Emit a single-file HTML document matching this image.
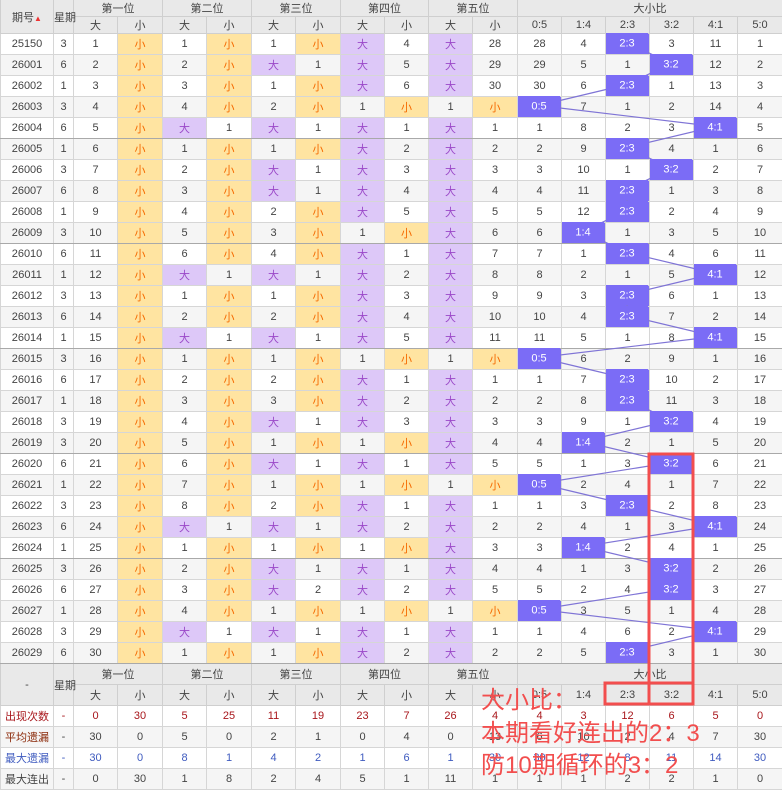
<!DOCTYPE html>
<html><head><meta charset="utf-8"><style>
body{margin:0;width:782px;height:790px;overflow:hidden;background:#fff;font-family:"Liberation Sans","Noto Sans CJK SC",sans-serif;}
.w{position:relative;width:782px;height:790px}
table{border-collapse:collapse;table-layout:fixed;width:782px;position:absolute;left:0;top:-1px}
td,th{padding:0;border:1px solid #d6d6d6;text-align:center;font-size:11px;color:#444;font-weight:normal;overflow:hidden;white-space:nowrap}
th.v{overflow:visible}
tr{height:21px}
th{background:#e9e9e9;color:#444;border-color:#cfcfcf}
tr.hd1{height:17px} tr.hd2{height:16px}
tr.f1,tr.f2{height:21px}
tbody tr:nth-child(even) td{background:#f5f5f5}
td.s{background:#ffe4a1 !important;color:#f56a00}
td.b{background:#ddc8f8 !important;color:#9a48c8}
td.h{background:#7b6cf6 !important;color:#fff}
tr.g td{border-bottom:1px solid #a9a9a9}
.r td{color:#a8161b} .a td{color:#444} .m td{color:#3f5bbf}
</style></head><body><div class="w">
<table>
<colgroup><col style="width:53px"><col style="width:20px"><col style="width:44px"><col style="width:45px"><col style="width:44px"><col style="width:45px"><col style="width:44px"><col style="width:45px"><col style="width:44px"><col style="width:44px"><col style="width:44px"><col style="width:45px"><col style="width:44px"><col style="width:44px"><col style="width:44px"><col style="width:44px"><col style="width:44px"><col style="width:45px"></colgroup>
<thead>
<tr class="hd1"><th rowspan="2">期号<span style="color:#e33;font-size:8px">▲</span></th><th rowspan="2" class="v">星期</th><th colspan="2">第一位</th><th colspan="2">第二位</th><th colspan="2">第三位</th><th colspan="2">第四位</th><th colspan="2">第五位</th><th colspan="6">大小比</th></tr>
<tr class="hd2"><th>大</th><th>小</th><th>大</th><th>小</th><th>大</th><th>小</th><th>大</th><th>小</th><th>大</th><th>小</th><th>0:5</th><th>1:4</th><th>2:3</th><th>3:2</th><th>4:1</th><th>5:0</th></tr>
</thead>
<tbody>
<tr><td>25150</td><td>3</td><td>1</td><td class="s">小</td><td>1</td><td class="s">小</td><td>1</td><td class="s">小</td><td class="b">大</td><td>4</td><td class="b">大</td><td>28</td><td>28</td><td>4</td><td class="h">2:3</td><td>3</td><td>11</td><td>1</td></tr>
<tr><td>26001</td><td>6</td><td>2</td><td class="s">小</td><td>2</td><td class="s">小</td><td class="b">大</td><td>1</td><td class="b">大</td><td>5</td><td class="b">大</td><td>29</td><td>29</td><td>5</td><td>1</td><td class="h">3:2</td><td>12</td><td>2</td></tr>
<tr><td>26002</td><td>1</td><td>3</td><td class="s">小</td><td>3</td><td class="s">小</td><td>1</td><td class="s">小</td><td class="b">大</td><td>6</td><td class="b">大</td><td>30</td><td>30</td><td>6</td><td class="h">2:3</td><td>1</td><td>13</td><td>3</td></tr>
<tr><td>26003</td><td>3</td><td>4</td><td class="s">小</td><td>4</td><td class="s">小</td><td>2</td><td class="s">小</td><td>1</td><td class="s">小</td><td>1</td><td class="s">小</td><td class="h">0:5</td><td>7</td><td>1</td><td>2</td><td>14</td><td>4</td></tr>
<tr class="g"><td>26004</td><td>6</td><td>5</td><td class="s">小</td><td class="b">大</td><td>1</td><td class="b">大</td><td>1</td><td class="b">大</td><td>1</td><td class="b">大</td><td>1</td><td>1</td><td>8</td><td>2</td><td>3</td><td class="h">4:1</td><td>5</td></tr>
<tr><td>26005</td><td>1</td><td>6</td><td class="s">小</td><td>1</td><td class="s">小</td><td>1</td><td class="s">小</td><td class="b">大</td><td>2</td><td class="b">大</td><td>2</td><td>2</td><td>9</td><td class="h">2:3</td><td>4</td><td>1</td><td>6</td></tr>
<tr><td>26006</td><td>3</td><td>7</td><td class="s">小</td><td>2</td><td class="s">小</td><td class="b">大</td><td>1</td><td class="b">大</td><td>3</td><td class="b">大</td><td>3</td><td>3</td><td>10</td><td>1</td><td class="h">3:2</td><td>2</td><td>7</td></tr>
<tr><td>26007</td><td>6</td><td>8</td><td class="s">小</td><td>3</td><td class="s">小</td><td class="b">大</td><td>1</td><td class="b">大</td><td>4</td><td class="b">大</td><td>4</td><td>4</td><td>11</td><td class="h">2:3</td><td>1</td><td>3</td><td>8</td></tr>
<tr><td>26008</td><td>1</td><td>9</td><td class="s">小</td><td>4</td><td class="s">小</td><td>2</td><td class="s">小</td><td class="b">大</td><td>5</td><td class="b">大</td><td>5</td><td>5</td><td>12</td><td class="h">2:3</td><td>2</td><td>4</td><td>9</td></tr>
<tr class="g"><td>26009</td><td>3</td><td>10</td><td class="s">小</td><td>5</td><td class="s">小</td><td>3</td><td class="s">小</td><td>1</td><td class="s">小</td><td class="b">大</td><td>6</td><td>6</td><td class="h">1:4</td><td>1</td><td>3</td><td>5</td><td>10</td></tr>
<tr><td>26010</td><td>6</td><td>11</td><td class="s">小</td><td>6</td><td class="s">小</td><td>4</td><td class="s">小</td><td class="b">大</td><td>1</td><td class="b">大</td><td>7</td><td>7</td><td>1</td><td class="h">2:3</td><td>4</td><td>6</td><td>11</td></tr>
<tr><td>26011</td><td>1</td><td>12</td><td class="s">小</td><td class="b">大</td><td>1</td><td class="b">大</td><td>1</td><td class="b">大</td><td>2</td><td class="b">大</td><td>8</td><td>8</td><td>2</td><td>1</td><td>5</td><td class="h">4:1</td><td>12</td></tr>
<tr><td>26012</td><td>3</td><td>13</td><td class="s">小</td><td>1</td><td class="s">小</td><td>1</td><td class="s">小</td><td class="b">大</td><td>3</td><td class="b">大</td><td>9</td><td>9</td><td>3</td><td class="h">2:3</td><td>6</td><td>1</td><td>13</td></tr>
<tr><td>26013</td><td>6</td><td>14</td><td class="s">小</td><td>2</td><td class="s">小</td><td>2</td><td class="s">小</td><td class="b">大</td><td>4</td><td class="b">大</td><td>10</td><td>10</td><td>4</td><td class="h">2:3</td><td>7</td><td>2</td><td>14</td></tr>
<tr class="g"><td>26014</td><td>1</td><td>15</td><td class="s">小</td><td class="b">大</td><td>1</td><td class="b">大</td><td>1</td><td class="b">大</td><td>5</td><td class="b">大</td><td>11</td><td>11</td><td>5</td><td>1</td><td>8</td><td class="h">4:1</td><td>15</td></tr>
<tr><td>26015</td><td>3</td><td>16</td><td class="s">小</td><td>1</td><td class="s">小</td><td>1</td><td class="s">小</td><td>1</td><td class="s">小</td><td>1</td><td class="s">小</td><td class="h">0:5</td><td>6</td><td>2</td><td>9</td><td>1</td><td>16</td></tr>
<tr><td>26016</td><td>6</td><td>17</td><td class="s">小</td><td>2</td><td class="s">小</td><td>2</td><td class="s">小</td><td class="b">大</td><td>1</td><td class="b">大</td><td>1</td><td>1</td><td>7</td><td class="h">2:3</td><td>10</td><td>2</td><td>17</td></tr>
<tr><td>26017</td><td>1</td><td>18</td><td class="s">小</td><td>3</td><td class="s">小</td><td>3</td><td class="s">小</td><td class="b">大</td><td>2</td><td class="b">大</td><td>2</td><td>2</td><td>8</td><td class="h">2:3</td><td>11</td><td>3</td><td>18</td></tr>
<tr><td>26018</td><td>3</td><td>19</td><td class="s">小</td><td>4</td><td class="s">小</td><td class="b">大</td><td>1</td><td class="b">大</td><td>3</td><td class="b">大</td><td>3</td><td>3</td><td>9</td><td>1</td><td class="h">3:2</td><td>4</td><td>19</td></tr>
<tr class="g"><td>26019</td><td>3</td><td>20</td><td class="s">小</td><td>5</td><td class="s">小</td><td>1</td><td class="s">小</td><td>1</td><td class="s">小</td><td class="b">大</td><td>4</td><td>4</td><td class="h">1:4</td><td>2</td><td>1</td><td>5</td><td>20</td></tr>
<tr><td>26020</td><td>6</td><td>21</td><td class="s">小</td><td>6</td><td class="s">小</td><td class="b">大</td><td>1</td><td class="b">大</td><td>1</td><td class="b">大</td><td>5</td><td>5</td><td>1</td><td>3</td><td class="h">3:2</td><td>6</td><td>21</td></tr>
<tr><td>26021</td><td>1</td><td>22</td><td class="s">小</td><td>7</td><td class="s">小</td><td>1</td><td class="s">小</td><td>1</td><td class="s">小</td><td>1</td><td class="s">小</td><td class="h">0:5</td><td>2</td><td>4</td><td>1</td><td>7</td><td>22</td></tr>
<tr><td>26022</td><td>3</td><td>23</td><td class="s">小</td><td>8</td><td class="s">小</td><td>2</td><td class="s">小</td><td class="b">大</td><td>1</td><td class="b">大</td><td>1</td><td>1</td><td>3</td><td class="h">2:3</td><td>2</td><td>8</td><td>23</td></tr>
<tr><td>26023</td><td>6</td><td>24</td><td class="s">小</td><td class="b">大</td><td>1</td><td class="b">大</td><td>1</td><td class="b">大</td><td>2</td><td class="b">大</td><td>2</td><td>2</td><td>4</td><td>1</td><td>3</td><td class="h">4:1</td><td>24</td></tr>
<tr class="g"><td>26024</td><td>1</td><td>25</td><td class="s">小</td><td>1</td><td class="s">小</td><td>1</td><td class="s">小</td><td>1</td><td class="s">小</td><td class="b">大</td><td>3</td><td>3</td><td class="h">1:4</td><td>2</td><td>4</td><td>1</td><td>25</td></tr>
<tr><td>26025</td><td>3</td><td>26</td><td class="s">小</td><td>2</td><td class="s">小</td><td class="b">大</td><td>1</td><td class="b">大</td><td>1</td><td class="b">大</td><td>4</td><td>4</td><td>1</td><td>3</td><td class="h">3:2</td><td>2</td><td>26</td></tr>
<tr><td>26026</td><td>6</td><td>27</td><td class="s">小</td><td>3</td><td class="s">小</td><td class="b">大</td><td>2</td><td class="b">大</td><td>2</td><td class="b">大</td><td>5</td><td>5</td><td>2</td><td>4</td><td class="h">3:2</td><td>3</td><td>27</td></tr>
<tr><td>26027</td><td>1</td><td>28</td><td class="s">小</td><td>4</td><td class="s">小</td><td>1</td><td class="s">小</td><td>1</td><td class="s">小</td><td>1</td><td class="s">小</td><td class="h">0:5</td><td>3</td><td>5</td><td>1</td><td>4</td><td>28</td></tr>
<tr><td>26028</td><td>3</td><td>29</td><td class="s">小</td><td class="b">大</td><td>1</td><td class="b">大</td><td>1</td><td class="b">大</td><td>1</td><td class="b">大</td><td>1</td><td>1</td><td>4</td><td>6</td><td>2</td><td class="h">4:1</td><td>29</td></tr>
<tr class="g"><td>26029</td><td>6</td><td>30</td><td class="s">小</td><td>1</td><td class="s">小</td><td>1</td><td class="s">小</td><td class="b">大</td><td>2</td><td class="b">大</td><td>2</td><td>2</td><td>5</td><td class="h">2:3</td><td>3</td><td>1</td><td>30</td></tr>
</tbody>
<tbody class="ft">
<tr class="f1"><th rowspan="2">-</th><th rowspan="2" class="v">星期</th><th colspan="2">第一位</th><th colspan="2">第二位</th><th colspan="2">第三位</th><th colspan="2">第四位</th><th colspan="2">第五位</th><th colspan="6">大小比</th></tr>
<tr class="f2"><th>大</th><th>小</th><th>大</th><th>小</th><th>大</th><th>小</th><th>大</th><th>小</th><th>大</th><th>小</th><th>0:5</th><th>1:4</th><th>2:3</th><th>3:2</th><th>4:1</th><th>5:0</th></tr>
<tr class="r"><td>出现次数</td><td>-</td><td>0</td><td>30</td><td>5</td><td>25</td><td>11</td><td>19</td><td>23</td><td>7</td><td>26</td><td>4</td><td>4</td><td>3</td><td>12</td><td>6</td><td>5</td><td>0</td></tr>
<tr class="a"><td style="color:#8b2a0a;background:#f5f5f5">平均遗漏</td><td style="background:#f5f5f5">-</td><td style="background:#f5f5f5">30</td><td style="background:#f5f5f5">0</td><td style="background:#f5f5f5">5</td><td style="background:#f5f5f5">0</td><td style="background:#f5f5f5">2</td><td style="background:#f5f5f5">1</td><td style="background:#f5f5f5">0</td><td style="background:#f5f5f5">4</td><td style="background:#f5f5f5">0</td><td style="background:#f5f5f5">13</td><td style="background:#f5f5f5">6</td><td style="background:#f5f5f5">10</td><td style="background:#f5f5f5">2</td><td style="background:#f5f5f5">4</td><td style="background:#f5f5f5">7</td><td style="background:#f5f5f5">30</td></tr>
<tr class="m"><td>最大遗漏</td><td>-</td><td>30</td><td>0</td><td>8</td><td>1</td><td>4</td><td>2</td><td>1</td><td>6</td><td>1</td><td>30</td><td>30</td><td>12</td><td>8</td><td>11</td><td>14</td><td>30</td></tr>
<tr class="a"><td style="background:#f5f5f5">最大连出</td><td style="background:#f5f5f5">-</td><td style="background:#f5f5f5">0</td><td style="background:#f5f5f5">30</td><td style="background:#f5f5f5">1</td><td style="background:#f5f5f5">8</td><td style="background:#f5f5f5">2</td><td style="background:#f5f5f5">4</td><td style="background:#f5f5f5">5</td><td style="background:#f5f5f5">1</td><td style="background:#f5f5f5">11</td><td style="background:#f5f5f5">1</td><td style="background:#f5f5f5">1</td><td style="background:#f5f5f5">1</td><td style="background:#f5f5f5">2</td><td style="background:#f5f5f5">2</td><td style="background:#f5f5f5">1</td><td style="background:#f5f5f5">0</td></tr>
</tbody>
</table>
<svg width="782" height="790" style="position:absolute;left:0;top:-1px" xmlns="http://www.w3.org/2000/svg">
<polyline fill="none" stroke="#7f74d6" stroke-width="1.2" points="627,43.5 671,64.5 627,85.5 539,106.5 715,127.5 627,148.5 671,169.5 627,190.5 627,211.5 583,232.5 627,253.5 715,274.5 627,295.5 627,316.5 715,337.5 539,358.5 627,379.5 627,400.5 671,421.5 583,442.5 671,463.5 539,484.5 627,505.5 715,526.5 583,547.5 671,568.5 671,589.5 539,610.5 715,631.5 627,652.5"/>
<g fill="#7b6cf6">
<rect x="606" y="34" width="42" height="20"/><rect x="650" y="55" width="42" height="20"/><rect x="606" y="76" width="42" height="20"/><rect x="518" y="97" width="42" height="20"/><rect x="694" y="118" width="42" height="20"/><rect x="606" y="139" width="42" height="20"/><rect x="650" y="160" width="42" height="20"/><rect x="606" y="181" width="42" height="20"/><rect x="606" y="202" width="42" height="20"/><rect x="562" y="223" width="42" height="20"/><rect x="606" y="244" width="42" height="20"/><rect x="694" y="265" width="42" height="20"/><rect x="606" y="286" width="42" height="20"/><rect x="606" y="307" width="42" height="20"/><rect x="694" y="328" width="42" height="20"/><rect x="518" y="349" width="42" height="20"/><rect x="606" y="370" width="42" height="20"/><rect x="606" y="391" width="42" height="20"/><rect x="650" y="412" width="42" height="20"/><rect x="562" y="433" width="42" height="20"/><rect x="650" y="454" width="42" height="20"/><rect x="518" y="475" width="42" height="20"/><rect x="606" y="496" width="42" height="20"/><rect x="694" y="517" width="42" height="20"/><rect x="562" y="538" width="42" height="20"/><rect x="650" y="559" width="42" height="20"/><rect x="650" y="580" width="42" height="20"/><rect x="518" y="601" width="42" height="20"/><rect x="694" y="622" width="42" height="20"/><rect x="606" y="643" width="42" height="20"/>
</g>
<g fill="#fff" font-size="11" text-anchor="middle" font-family="Liberation Sans,sans-serif">
<text x="627" y="47.5">2:3</text><text x="671" y="68.5">3:2</text><text x="627" y="89.5">2:3</text><text x="539" y="110.5">0:5</text><text x="715" y="131.5">4:1</text><text x="627" y="152.5">2:3</text><text x="671" y="173.5">3:2</text><text x="627" y="194.5">2:3</text><text x="627" y="215.5">2:3</text><text x="583" y="236.5">1:4</text><text x="627" y="257.5">2:3</text><text x="715" y="278.5">4:1</text><text x="627" y="299.5">2:3</text><text x="627" y="320.5">2:3</text><text x="715" y="341.5">4:1</text><text x="539" y="362.5">0:5</text><text x="627" y="383.5">2:3</text><text x="627" y="404.5">2:3</text><text x="671" y="425.5">3:2</text><text x="583" y="446.5">1:4</text><text x="671" y="467.5">3:2</text><text x="539" y="488.5">0:5</text><text x="627" y="509.5">2:3</text><text x="715" y="530.5">4:1</text><text x="583" y="551.5">1:4</text><text x="671" y="572.5">3:2</text><text x="671" y="593.5">3:2</text><text x="539" y="614.5">0:5</text><text x="715" y="635.5">4:1</text><text x="627" y="656.5">2:3</text>
</g>
<g fill="none" stroke="#f24e4e" stroke-width="3">
<rect x="649" y="455" width="44" height="250"/>
<rect x="605" y="684" width="88" height="21"/>
</g>
<g fill="#f24e4e" font-size="24" font-family="Liberation Sans,Noto Sans CJK SC,sans-serif">
<text x="481" y="709">大小比：</text>
<text x="481" y="742">本期看好连出的2：3</text>
<text x="481" y="774">防10期循环的3：2</text>
</g>
</svg>
</div></body></html>
